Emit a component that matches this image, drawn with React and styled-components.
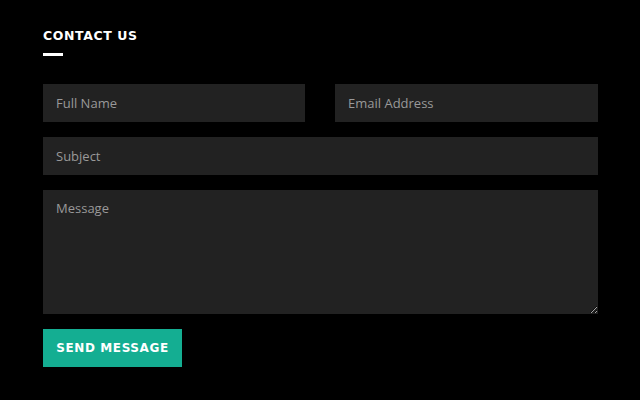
import React from 'react';
import styled, { createGlobalStyle } from 'styled-components';

const GlobalStyle = createGlobalStyle`
  html, body {
    margin: 0;
    padding: 0;
    background: #000;
  }
  body {
    font-family: 'Open Sans', 'Liberation Sans', sans-serif;
  }
`;

export default function App() {
  return (
    <>
      <GlobalStyle />
      <Section>
        <Heading>Contact Us</Heading>
        <Bar />
        <Form onSubmit={e => e.preventDefault()}>
          <Row>
            <Field type="text" placeholder="Full Name" />
            <Field type="email" placeholder="Email Address" />
          </Row>
          <Field type="text" placeholder="Subject" />
          <Message placeholder="Message" />
          <div>
            <SendButton type="submit">Send Message</SendButton>
          </div>
        </Form>
      </Section>
    </>
  );
}

/* #### STYLED COMPONENTS #### */

const Section = styled.section`
  box-sizing: border-box;
  width: 598px;
  min-height: 400px;
  padding: 29px 0 0 43px;
  background: #000;
`;

const Heading = styled.h4`
  margin: 0;
  font-family: 'DejaVu Sans', 'Liberation Sans', sans-serif;
  font-weight: 700;
  font-size: 12.5px;
  line-height: 14px;
  letter-spacing: 0.6px;
  text-transform: uppercase;
  color: #fff;
`;

const Bar = styled.div`
  width: 20px;
  height: 3px;
  margin-top: 10px;
  background: #fff;
`;

const Form = styled.form`
  display: flex;
  flex-direction: column;
  gap: 15px;
  margin-top: 28px;
`;

const Row = styled.div`
  display: grid;
  grid-template-columns: 262px 263px;
  column-gap: 30px;
`;

const Field = styled.input`
  box-sizing: border-box;
  width: 100%;
  height: 38px;
  padding: 0 13px;
  border: none;
  outline: none;
  background: #222;
  color: #ccc;
  font-family: 'Open Sans', 'Liberation Sans', sans-serif;
  font-size: 13px;
  &::placeholder {
    color: #999;
  }
`;

const Message = styled.textarea`
  box-sizing: border-box;
  width: 100%;
  height: 124px;
  padding: 9px 13px;
  border: none;
  outline: none;
  background: #222;
  color: #ccc;
  font-family: 'Open Sans', 'Liberation Sans', sans-serif;
  font-size: 13px;
  resize: vertical;
  &::placeholder {
    color: #999;
  }
`;

const SendButton = styled.button`
  height: 38px;
  width: 139px;
  padding: 0;
  border: none;
  background: #14ae92;
  color: #fff;
  font-family: 'DejaVu Sans', 'Liberation Sans', sans-serif;
  font-weight: 700;
  font-size: 12px;
  letter-spacing: 0.6px;
  text-transform: uppercase;
  cursor: pointer;
`;
